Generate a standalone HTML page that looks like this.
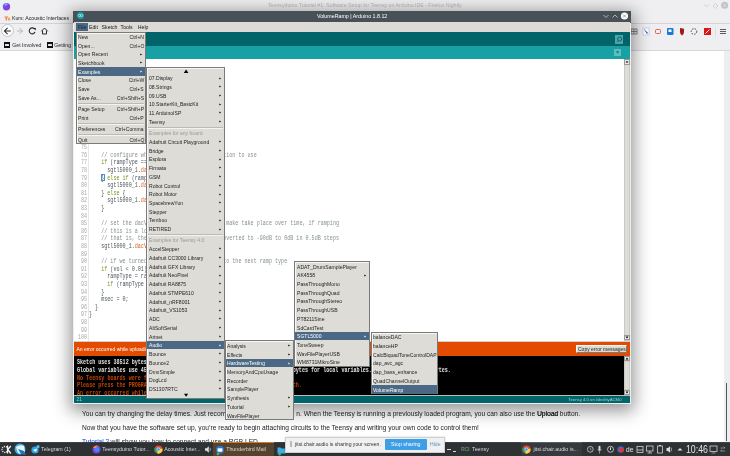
<!DOCTYPE html><html><head><meta charset="utf-8"><style>
*{margin:0;padding:0;box-sizing:border-box}
html,body{width:730px;height:456px;overflow:hidden;background:#fff;font-family:"Liberation Sans",sans-serif}
#root{position:absolute;left:0;top:0;width:730px;height:456px;overflow:hidden;will-change:transform}
.a{position:absolute}
.t{position:absolute;white-space:pre;line-height:1}
.m{position:absolute;background:#dddcd7;border:1px solid #7a7a7a;box-shadow:inset 1px 1px 0 #f6f6f4}
.mi{position:absolute;left:1px;height:8.8px;font-size:5.05px;color:#1a1a1a;white-space:pre}
.mi span{position:absolute;top:2px}
.hl{background:#4b6885;color:#fff}
.ar{position:absolute;width:0;height:0;border-left:2px solid #000;border-top:1.3px solid transparent;border-bottom:1.3px solid transparent}
.hl .ar{border-left-color:#fff}
.sp{position:absolute;height:1px;background:#bcbab5}
.mo{position:absolute;font-family:"Liberation Mono",monospace;white-space:pre;line-height:1}
</style></head><body><div id="root"><div class="a" style="left:0px;top:0px;width:730px;height:51px;background:#efeff1;"></div>
<div class="a" style="left:0px;top:23px;width:730px;height:1px;background:#d4d4d8;"></div>
<div class="a" style="left:0px;top:50px;width:730px;height:1px;background:#d8d8dc;"></div>
<div class="a" style="left:724px;top:51px;width:6px;height:391px;background:#eeeef0;"></div>
<div class="a" style="left:726px;top:383px;width:1px;height:58px;background:#555;"></div>
<div class="t" style="left:268px;top:3.1px;font-size:5.22px;color:#b9b9bd;">Teensyduino Tutorial #1: Software Setup for Teensy on Arduino IDE - Firefox Nightly</div>
<svg class="a" style="left:1.5px;top:1.5px" width="9" height="9"><defs><linearGradient id="ffg" x1="0" y1="0" x2="1" y2="1"><stop offset="0" stop-color="#4a7cff"/><stop offset="0.6" stop-color="#7a3fe0"/><stop offset="1" stop-color="#c03ad8"/></linearGradient></defs><circle cx="4.5" cy="4.7" r="3.7" fill="url(#ffg)"/><path d="M2.5 2.2 Q4.5 1 6 2.3 Q4.2 2.4 3.6 4" fill="#a9c8ff" opacity="0.8"/></svg>
<svg class="a" style="left:700px;top:1px" width="30" height="10"><path d="M4.2 3.4 L6.6 5.6 L9 3.4" stroke="#c4c4c8" fill="none" stroke-width="0.7"/><path d="M15.5 2.6 L18 5 L15.5 7.4 L13 5Z" stroke="#c4c4c8" fill="none" stroke-width="0.7"/><circle cx="24.6" cy="4.3" r="3.5" fill="#c2c4c8"/><path d="M23.2 2.9 L26 5.7 M26 2.9 L23.2 5.7" stroke="#e6e7ea" stroke-width="0.7"/></svg>
<svg class="a" style="left:3.5px;top:15px" width="7" height="6"><path d="M0.5 1.5 H4 V2.6 H2.9 V5.5 H1.6 V2.6 H0.5Z" fill="#f0823a"/><path d="M3.6 3 Q4.6 2 5.6 2.6 Q6.5 3.5 6.2 5.5 H4 Z" fill="#f6a25a"/></svg>
<div class="t" style="left:12px;top:15.6px;font-size:5.2px;color:#1e1e22;">Kurs: Acoustic Interfaces</div>
<div class="a" style="left:1.2px;top:24.3px;width:13px;height:13px;border-radius:50%;background:#fbfbfb;border:0.6px solid #c8c8cc"></div>
<svg class="a" style="left:0;top:23px" width="60" height="17"><path d="M4.8 8 H10.8 M7.6 4.8 L4.4 8 L7.6 11.2" stroke="#2a2a2e" fill="none" stroke-width="1.05"/><path d="M17 8 H22.5 M19.5 5 L22.5 8 L19.5 11" stroke="#b0b0b4" fill="none" stroke-width="0.9"/><path d="M34.6 6 A3 3 0 1 0 35 9" stroke="#2a2a2e" fill="none" stroke-width="1.1"/><path d="M33 5 L35.8 5 L35.8 7.5 Z" fill="#2a2a2e"/><path d="M41.3 8.3 L44.5 5 L47.7 8.3 M42.5 7.5 V11 H46.5 V7.5" stroke="#2a2a2e" fill="none" stroke-width="1"/></svg>
<div class="a" style="left:4.3px;top:41.6px;width:6.2px;height:6.2px;background:#111;"></div>
<div class="a" style="left:5.4px;top:44.3px;width:4px;height:1.8px;background:#e8e8e8;border-radius:0.5px"></div>
<div class="t" style="left:12.3px;top:42.5px;font-size:5.2px;color:#2a2a2e;">Get Involved</div>
<div class="a" style="left:46.6px;top:41.6px;width:6.2px;height:6.2px;background:#111;"></div>
<div class="a" style="left:47.7px;top:44.3px;width:4px;height:1.8px;background:#e8e8e8;border-radius:0.5px"></div>
<div class="t" style="left:54.3px;top:42.5px;font-size:5.2px;color:#2a2a2e;">Getting Started</div>
<svg class="a" style="left:630px;top:26px" width="100" height="12"><rect x="1" y="3" width="6" height="5" fill="none" stroke="#6a6a6e" stroke-width="0.8"/><path d="M1 5.5 H7 M4 3 V8" stroke="#6a6a6e" stroke-width="0.8"/><rect x="13" y="2" width="6" height="7" fill="#fff" stroke="#aac" stroke-width="0.5"/><path d="M13.5 2.5 L18 7 L17 8 Z" fill="#1a55c0"/><rect x="25.5" y="3.5" width="5" height="4" rx="1" fill="none" stroke="#e0524a" stroke-width="0.9"/><rect x="37" y="2" width="6.5" height="7" rx="1" fill="#1b7ad8"/><rect x="38.5" y="3.5" width="3" height="2.5" fill="#fff"/><path d="M50 2 L54 2.8 L54 6 Q54 8.5 52 9.5 Q50 8.5 50 6 Z" fill="#a01818"/><circle cx="64" cy="5.5" r="2.8" fill="none" stroke="#333" stroke-width="0.9" stroke-dasharray="1.5 1.2"/><rect x="74" y="2" width="7" height="7" fill="#d81818"/><path d="M75.5 7.5 L79.5 3.5" stroke="#fff" stroke-width="0.9"/><rect x="85" y="1" width="0.6" height="10" fill="#d4d4d8"/><path d="M90 3.5 H96 M90 5.5 H96 M90 7.5 H96" stroke="#4a4a4e" stroke-width="0.9"/></svg>
<div class="t" style="left:82px;top:411.2px;font-size:6.64px;color:#222;">You can try changing the delay times. Just recompile</div>
<div class="t" style="left:296.3px;top:411.2px;font-size:6.64px;color:#222">n. When the Teensy is running a previously loaded program, you can also use the <span style="text-shadow:0.3px 0 0 #222">Upload</span> button.</div>
<div class="t" style="left:82px;top:425.2px;font-size:6.64px;color:#222;">Now that you have the software set up, you’re ready to begin attaching circuits to the Teensy and writing your own code to control them!</div>
<div class="t" style="left:82px;top:439.2px;font-size:6.6px;color:#0a3cd8;">Tutorial 2</div>
<div class="t" style="left:110.6px;top:439.2px;font-size:6.64px;color:#222;">will show you how to connect and use a RGB LED</div>
<div class="a" style="left:73.3px;top:11px;width:557.5px;height:393.3px;background:#efefef;box-shadow:0 4px 16px 3px rgba(0,0,0,.42)"></div>
<div class="a" style="left:73.3px;top:11px;width:557.5px;height:11.6px;background:#485157;"></div>
<div class="a" style="left:76.5px;top:12.3px;width:7px;height:7px;border-radius:50%;background:#17a1a5"></div>
<svg class="a" style="left:76.5px;top:12.3px" width="7" height="7"><circle cx="2.4" cy="3.5" r="1.1" fill="none" stroke="#e6f7f7" stroke-width="0.6"/><circle cx="4.6" cy="3.5" r="1.1" fill="none" stroke="#e6f7f7" stroke-width="0.6"/></svg>
<div class="t" style="left:317px;top:14.2px;font-size:5.3px;color:#fff;">VolumeRamp | Arduino 1.8.12</div>
<svg class="a" style="left:600px;top:11px" width="31" height="10"><path d="M3.5 4 L6 6.5 L8.5 4" stroke="#c8ccd0" fill="none" stroke-width="0.8"/><path d="M12.5 6.5 L15 4 L17.5 6.5" stroke="#c8ccd0" fill="none" stroke-width="0.8"/><circle cx="24.5" cy="5" r="3.6" fill="#fff"/><path d="M23 3.5 L26 6.5 M26 3.5 L23 6.5" stroke="#8a8e92" stroke-width="0.8"/></svg>
<div class="a" style="left:74.3px;top:21.6px;width:555.5px;height:10.7px;background:#dcdbd6;"></div>
<div class="a" style="left:74.3px;top:31.8px;width:555.5px;height:0.5px;background:#555;"></div>
<div class="a" style="left:76px;top:22.6px;width:11.8px;height:8.6px;background:#4b6885;"></div>
<div class="t" style="left:78px;top:24.6px;font-size:5.2px;color:#1d2630;">File</div>
<div class="t" style="left:89px;top:24.6px;font-size:5.2px;color:#1a1a1a;">Edit</div>
<div class="t" style="left:101.6px;top:24.6px;font-size:5.2px;color:#1a1a1a;">Sketch</div>
<div class="t" style="left:120.6px;top:24.6px;font-size:5.2px;color:#1a1a1a;">Tools</div>
<div class="t" style="left:137.8px;top:24.6px;font-size:5.2px;color:#1a1a1a;">Help</div>
<div class="a" style="left:74.3px;top:32.3px;width:555.5px;height:14.2px;background:#006468;"></div>
<div class="a" style="left:615px;top:35px;width:8px;height:9px;background:#4aa6a9;"></div>
<svg class="a" style="left:615px;top:35px" width="8" height="9"><circle cx="4.7" cy="4" r="2" fill="none" stroke="#0b5c60" stroke-width="0.9"/><path d="M3.3 5.4 L1.9 7" stroke="#0b5c60" stroke-width="0.9"/></svg>
<div class="a" style="left:74.3px;top:45.5px;width:555.5px;height:13.3px;background:#17a1a5;"></div>
<div class="a" style="left:614px;top:49px;width:7px;height:6.5px;background:#5cbdc0;"></div>
<svg class="a" style="left:614px;top:49px" width="7" height="7"><path d="M1.8 2.3 H5.2 L3.5 4.5 Z" fill="#1a6f73"/></svg>
<div class="a" style="left:74.3px;top:59px;width:555.5px;height:282px;background:#fff;"></div>
<div class="a" style="left:88.3px;top:59px;width:0.7px;height:282px;background:#e6e6e6;"></div>
<div class="mo" style="left:81.20px;top:144.10px;font-size:6.800px;color:#a8a8a8;transform:scaleX(0.7475);transform-origin:0 0">75</div>
<div class="mo" style="left:81.20px;top:151.70px;font-size:6.800px;color:#a8a8a8;transform:scaleX(0.7475);transform-origin:0 0">76</div>
<div class="mo" style="left:88.9px;top:151.70px;font-size:6.800px;transform:scaleX(0.7475);transform-origin:0 0"><span style="color:#4a565b">    </span><span style="color:#85908f">// configure which type of volume transition to use</span></div>
<div class="mo" style="left:81.20px;top:159.30px;font-size:6.800px;color:#a8a8a8;transform:scaleX(0.7475);transform-origin:0 0">77</div>
<div class="mo" style="left:88.9px;top:159.30px;font-size:6.800px;transform:scaleX(0.7475);transform-origin:0 0"><span style="color:#4a565b">    </span><span style="color:#7a9220">if</span><span style="color:#4a565b"> (rampType == 0) {</span></div>
<div class="mo" style="left:81.20px;top:166.90px;font-size:6.800px;color:#a8a8a8;transform:scaleX(0.7475);transform-origin:0 0">78</div>
<div class="mo" style="left:88.9px;top:166.90px;font-size:6.800px;transform:scaleX(0.7475);transform-origin:0 0"><span style="color:#4a565b">      sgtl5000_1.</span><span style="color:#d9621a">dacVolumeRampDisable</span><span style="color:#4a565b">();</span></div>
<div class="mo" style="left:81.20px;top:174.50px;font-size:6.800px;color:#a8a8a8;transform:scaleX(0.7475);transform-origin:0 0">79</div>
<div class="mo" style="left:88.9px;top:174.50px;font-size:6.800px;transform:scaleX(0.7475);transform-origin:0 0"><span style="color:#4a565b">    } </span><span style="color:#7a9220">else</span><span style="color:#4a565b"> </span><span style="color:#7a9220">if</span><span style="color:#4a565b"> (rampType == 1) {</span></div>
<div class="mo" style="left:81.20px;top:182.10px;font-size:6.800px;color:#a8a8a8;transform:scaleX(0.7475);transform-origin:0 0">80</div>
<div class="mo" style="left:88.9px;top:182.10px;font-size:6.800px;transform:scaleX(0.7475);transform-origin:0 0"><span style="color:#4a565b">      sgtl5000_1.</span><span style="color:#d9621a">dacVolumeRampLinear</span><span style="color:#4a565b">();</span></div>
<div class="mo" style="left:81.20px;top:189.70px;font-size:6.800px;color:#a8a8a8;transform:scaleX(0.7475);transform-origin:0 0">81</div>
<div class="mo" style="left:88.9px;top:189.70px;font-size:6.800px;transform:scaleX(0.7475);transform-origin:0 0"><span style="color:#4a565b">    } </span><span style="color:#7a9220">else</span><span style="color:#4a565b"> {</span></div>
<div class="mo" style="left:81.20px;top:197.30px;font-size:6.800px;color:#a8a8a8;transform:scaleX(0.7475);transform-origin:0 0">82</div>
<div class="mo" style="left:88.9px;top:197.30px;font-size:6.800px;transform:scaleX(0.7475);transform-origin:0 0"><span style="color:#4a565b">      sgtl5000_1.</span><span style="color:#d9621a">dacVolumeRamp</span><span style="color:#4a565b">();</span></div>
<div class="mo" style="left:81.20px;top:204.90px;font-size:6.800px;color:#a8a8a8;transform:scaleX(0.7475);transform-origin:0 0">83</div>
<div class="mo" style="left:88.9px;top:204.90px;font-size:6.800px;transform:scaleX(0.7475);transform-origin:0 0"><span style="color:#4a565b">    }</span></div>
<div class="mo" style="left:81.20px;top:212.50px;font-size:6.800px;color:#a8a8a8;transform:scaleX(0.7475);transform-origin:0 0">84</div>
<div class="mo" style="left:81.20px;top:220.10px;font-size:6.800px;color:#a8a8a8;transform:scaleX(0.7475);transform-origin:0 0">85</div>
<div class="mo" style="left:88.9px;top:220.10px;font-size:6.800px;transform:scaleX(0.7475);transform-origin:0 0"><span style="color:#4a565b">    </span><span style="color:#85908f">// set the dacVolume. Volume changes you make take place over time, if ramping</span></div>
<div class="mo" style="left:81.20px;top:227.70px;font-size:6.800px;color:#a8a8a8;transform:scaleX(0.7475);transform-origin:0 0">86</div>
<div class="mo" style="left:88.9px;top:227.70px;font-size:6.800px;transform:scaleX(0.7475);transform-origin:0 0"><span style="color:#4a565b">    </span><span style="color:#85908f">// this is a log scale</span></div>
<div class="mo" style="left:81.20px;top:235.30px;font-size:6.800px;color:#a8a8a8;transform:scaleX(0.7475);transform-origin:0 0">87</div>
<div class="mo" style="left:88.9px;top:235.30px;font-size:6.800px;transform:scaleX(0.7475);transform-origin:0 0"><span style="color:#4a565b">    </span><span style="color:#85908f">// that is, the values of 0 to 1.0 is converted to -90dB to 0dB in 0.5dB steps</span></div>
<div class="mo" style="left:81.20px;top:242.90px;font-size:6.800px;color:#a8a8a8;transform:scaleX(0.7475);transform-origin:0 0">88</div>
<div class="mo" style="left:88.9px;top:242.90px;font-size:6.800px;transform:scaleX(0.7475);transform-origin:0 0"><span style="color:#4a565b">    sgtl5000_1.</span><span style="color:#d9621a">dacVolume</span><span style="color:#4a565b">(vol);</span></div>
<div class="mo" style="left:81.20px;top:250.50px;font-size:6.800px;color:#a8a8a8;transform:scaleX(0.7475);transform-origin:0 0">89</div>
<div class="mo" style="left:81.20px;top:258.10px;font-size:6.800px;color:#a8a8a8;transform:scaleX(0.7475);transform-origin:0 0">90</div>
<div class="mo" style="left:88.9px;top:258.10px;font-size:6.800px;transform:scaleX(0.7475);transform-origin:0 0"><span style="color:#4a565b">    </span><span style="color:#85908f">// if we turned the volume down, switch to the next ramp type</span></div>
<div class="mo" style="left:81.20px;top:265.70px;font-size:6.800px;color:#a8a8a8;transform:scaleX(0.7475);transform-origin:0 0">91</div>
<div class="mo" style="left:88.9px;top:265.70px;font-size:6.800px;transform:scaleX(0.7475);transform-origin:0 0"><span style="color:#4a565b">    </span><span style="color:#7a9220">if</span><span style="color:#4a565b"> (vol &lt; 0.01) {</span></div>
<div class="mo" style="left:81.20px;top:273.30px;font-size:6.800px;color:#a8a8a8;transform:scaleX(0.7475);transform-origin:0 0">92</div>
<div class="mo" style="left:88.9px;top:273.30px;font-size:6.800px;transform:scaleX(0.7475);transform-origin:0 0"><span style="color:#4a565b">      rampType = rampType + 1;</span></div>
<div class="mo" style="left:81.20px;top:280.90px;font-size:6.800px;color:#a8a8a8;transform:scaleX(0.7475);transform-origin:0 0">93</div>
<div class="mo" style="left:88.9px;top:280.90px;font-size:6.800px;transform:scaleX(0.7475);transform-origin:0 0"><span style="color:#4a565b">      </span><span style="color:#7a9220">if</span><span style="color:#4a565b"> (rampType &gt; 2) rampType = 0;</span></div>
<div class="mo" style="left:81.20px;top:288.50px;font-size:6.800px;color:#a8a8a8;transform:scaleX(0.7475);transform-origin:0 0">94</div>
<div class="mo" style="left:88.9px;top:288.50px;font-size:6.800px;transform:scaleX(0.7475);transform-origin:0 0"><span style="color:#4a565b">    }</span></div>
<div class="mo" style="left:81.20px;top:296.10px;font-size:6.800px;color:#a8a8a8;transform:scaleX(0.7475);transform-origin:0 0">95</div>
<div class="mo" style="left:88.9px;top:296.10px;font-size:6.800px;transform:scaleX(0.7475);transform-origin:0 0"><span style="color:#4a565b">    msec = 0;</span></div>
<div class="mo" style="left:81.20px;top:303.70px;font-size:6.800px;color:#a8a8a8;transform:scaleX(0.7475);transform-origin:0 0">96</div>
<div class="mo" style="left:88.9px;top:303.70px;font-size:6.800px;transform:scaleX(0.7475);transform-origin:0 0"><span style="color:#4a565b">  }</span></div>
<div class="mo" style="left:81.20px;top:311.30px;font-size:6.800px;color:#a8a8a8;transform:scaleX(0.7475);transform-origin:0 0">97</div>
<div class="mo" style="left:88.9px;top:311.30px;font-size:6.800px;transform:scaleX(0.7475);transform-origin:0 0"><span style="color:#4a565b">}</span></div>
<div class="mo" style="left:81.20px;top:318.90px;font-size:6.800px;color:#a8a8a8;transform:scaleX(0.7475);transform-origin:0 0">98</div>
<div class="mo" style="left:81.20px;top:326.50px;font-size:6.800px;color:#a8a8a8;transform:scaleX(0.7475);transform-origin:0 0">99</div>
<div class="mo" style="left:78.15px;top:334.10px;font-size:6.800px;color:#a8a8a8;transform:scaleX(0.7475);transform-origin:0 0">100</div>
<div class="a" style="left:101.3px;top:174px;width:3.4px;height:6.6px;border:0.6px solid #4a90c8"></div>
<div class="a" style="left:623.5px;top:59px;width:6.8px;height:282px;background:#cbc9c3;"></div>
<div class="a" style="left:625px;top:65px;width:3.6px;height:270px;background:#dddcd6;"></div>
<div class="a" style="left:624px;top:59px;width:6px;height:5.5px;background:#e8e7e3;border:0.5px solid #999"></div>
<svg class="a" style="left:624px;top:59px" width="6" height="6"><path d="M1.6 3.6 H4.4 L3 1.8 Z" fill="#000"/></svg>
<div class="a" style="left:624px;top:335px;width:6px;height:5px;background:#e8e7e3;border:0.5px solid #999"></div>
<svg class="a" style="left:624px;top:335px" width="6" height="6"><path d="M1.6 1.6 H4.4 L3 3.4 Z" fill="#000"/></svg>
<div class="a" style="left:74.3px;top:341px;width:555.5px;height:1px;background:#d0d0d0;"></div>
<div class="a" style="left:74.3px;top:342px;width:555.5px;height:13.5px;background:#e34c00;"></div>
<div class="t" style="left:76.4px;top:347.4px;font-size:5.0px;color:#fff;">An error occurred while uploading the sketch</div>
<div class="a" style="left:576.2px;top:345px;width:50.8px;height:7.5px;background:#dcdbd6;border-top:0.6px solid #fafafa;border-left:0.6px solid #fafafa;border-bottom:0.7px solid #7a7a7a;border-right:0.7px solid #7a7a7a"></div>
<div class="t" style="left:578px;top:346.6px;font-size:5.0px;color:#222;">Copy error messages</div>
<div class="a" style="left:74.3px;top:355.5px;width:555.5px;height:39.5px;background:#000;"></div>
<div class="mo" style="left:76.5px;top:359.30px;font-size:6.8px;color:#fff;font-weight:bold;opacity:0.88;transform:scaleX(0.7451);transform-origin:0 0">Sketch uses 38512 bytes (0%) of program storage space. Maximum is 2031616 bytes.</div>
<div class="mo" style="left:76.5px;top:366.90px;font-size:6.8px;color:#fff;font-weight:bold;opacity:0.88;transform:scaleX(0.7451);transform-origin:0 0">Global variables use 4591 bytes (8%) of dynamic memory, leaving 466084 bytes for local variables. Maximum is 1048576 bytes.</div>
<div class="mo" style="left:76.5px;top:374.50px;font-size:6.8px;color:#e34c00;font-weight:bold;opacity:0.88;transform:scaleX(0.7451);transform-origin:0 0">No Teensy boards were found on any USB ports of your computer.</div>
<div class="mo" style="left:76.5px;top:382.10px;font-size:6.8px;color:#e34c00;font-weight:bold;opacity:0.88;transform:scaleX(0.7451);transform-origin:0 0">Please press the PROGRAM MODE BUTTON on your Teensy to upload your sketch.</div>
<div class="mo" style="left:76.5px;top:389.70px;font-size:6.8px;color:#e34c00;font-weight:bold;opacity:0.88;transform:scaleX(0.7451);transform-origin:0 0">An error occurred while uploading the sketch</div>
<div class="a" style="left:623.5px;top:355.8px;width:6.8px;height:39.2px;background:#cbc9c3;"></div>
<div class="a" style="left:625px;top:362px;width:3.6px;height:27px;background:#dddcd6;"></div>
<div class="a" style="left:624px;top:356px;width:6px;height:5px;background:#e8e7e3;border:0.5px solid #999"></div>
<svg class="a" style="left:624px;top:356px" width="6" height="6"><path d="M1.6 3.4 H4.4 L3 1.6 Z" fill="#000"/></svg>
<div class="a" style="left:624px;top:389.6px;width:6px;height:5px;background:#e8e7e3;border:0.5px solid #999"></div>
<svg class="a" style="left:624px;top:389.6px" width="6" height="6"><path d="M1.6 1.6 H4.4 L3 3.4 Z" fill="#000"/></svg>
<div class="a" style="left:74.3px;top:394.9px;width:555.5px;height:1px;background:#b8bcbc;"></div>
<div class="a" style="left:74.3px;top:395.6px;width:555.5px;height:7.9px;background:#006468;"></div>
<div class="t" style="left:76.5px;top:397.3px;font-size:5.0px;color:#9fcfd1;">21</div>
<div class="t" style="right:108.5px;top:397.6px;font-size:4.25px;color:#a6d2d4">Teensy 4.0 on /dev/ttyACM0</div>
<div class="m" style="left:75.5px;top:31.6px;width:70.5px;height:112.6px"></div>
<div class="t" style="left:78.30px;top:35.00px;font-size:5.6px;color:#1e1e1e;transform:scaleX(0.905);transform-origin:0 0">New</div>
<div class="t" style="right:586.00px;top:35.00px;font-size:5.6px;color:#1e1e1e;transform:scaleX(0.905);transform-origin:100% 0">Ctrl+N</div>
<div class="t" style="left:78.30px;top:43.67px;font-size:5.6px;color:#1e1e1e;transform:scaleX(0.905);transform-origin:0 0">Open...</div>
<div class="t" style="right:586.00px;top:43.67px;font-size:5.6px;color:#1e1e1e;transform:scaleX(0.905);transform-origin:100% 0">Ctrl+O</div>
<div class="t" style="left:78.30px;top:52.34px;font-size:5.6px;color:#1e1e1e;transform:scaleX(0.905);transform-origin:0 0">Open Recent</div>
<svg class="a" style="left:138.50px;top:51.64px" width="5" height="5"><path d="M1.4 1.4 L3.1 2.5 L1.4 3.6 Z" fill="#000"/></svg>
<div class="t" style="left:78.30px;top:61.01px;font-size:5.6px;color:#1e1e1e;transform:scaleX(0.905);transform-origin:0 0">Sketchbook</div>
<svg class="a" style="left:138.50px;top:60.31px" width="5" height="5"><path d="M1.4 1.4 L3.1 2.5 L1.4 3.6 Z" fill="#000"/></svg>
<div class="a" style="left:76.5px;top:67.08px;width:68.5px;height:8.8px;background:#4b6885"></div>
<div class="t" style="left:78.30px;top:69.68px;font-size:5.6px;color:#fff;transform:scaleX(0.905);transform-origin:0 0">Examples</div>
<svg class="a" style="left:138.50px;top:68.98px" width="5" height="5"><path d="M1.4 1.4 L3.1 2.5 L1.4 3.6 Z" fill="#fff"/></svg>
<div class="t" style="left:78.30px;top:78.35px;font-size:5.6px;color:#1e1e1e;transform:scaleX(0.905);transform-origin:0 0">Close</div>
<div class="t" style="right:586.00px;top:78.35px;font-size:5.6px;color:#1e1e1e;transform:scaleX(0.905);transform-origin:100% 0">Ctrl+W</div>
<div class="t" style="left:78.30px;top:87.02px;font-size:5.6px;color:#1e1e1e;transform:scaleX(0.905);transform-origin:0 0">Save</div>
<div class="t" style="right:586.00px;top:87.02px;font-size:5.6px;color:#1e1e1e;transform:scaleX(0.905);transform-origin:100% 0">Ctrl+S</div>
<div class="t" style="left:78.30px;top:95.69px;font-size:5.6px;color:#1e1e1e;transform:scaleX(0.905);transform-origin:0 0">Save As...</div>
<div class="t" style="right:586.00px;top:95.69px;font-size:5.6px;color:#1e1e1e;transform:scaleX(0.905);transform-origin:100% 0">Ctrl+Shift+S</div>
<div class="sp" style="left:77.5px;top:102.68px;width:66.5px"></div>
<div class="a" style="left:77.5px;top:103.68px;width:66.5px;height:0.6px;background:#f3f3f0"></div>
<div class="t" style="left:78.30px;top:107.06px;font-size:5.6px;color:#1e1e1e;transform:scaleX(0.905);transform-origin:0 0">Page Setup</div>
<div class="t" style="right:586.00px;top:107.06px;font-size:5.6px;color:#1e1e1e;transform:scaleX(0.905);transform-origin:100% 0">Ctrl+Shift+P</div>
<div class="t" style="left:78.30px;top:115.73px;font-size:5.6px;color:#1e1e1e;transform:scaleX(0.905);transform-origin:0 0">Print</div>
<div class="t" style="right:586.00px;top:115.73px;font-size:5.6px;color:#1e1e1e;transform:scaleX(0.905);transform-origin:100% 0">Ctrl+P</div>
<div class="sp" style="left:77.5px;top:122.72px;width:66.5px"></div>
<div class="a" style="left:77.5px;top:123.72px;width:66.5px;height:0.6px;background:#f3f3f0"></div>
<div class="t" style="left:78.30px;top:127.10px;font-size:5.6px;color:#1e1e1e;transform:scaleX(0.905);transform-origin:0 0">Preferences</div>
<div class="t" style="right:586.00px;top:127.10px;font-size:5.6px;color:#1e1e1e;transform:scaleX(0.905);transform-origin:100% 0">Ctrl+Comma</div>
<div class="sp" style="left:77.5px;top:134.08px;width:66.5px"></div>
<div class="a" style="left:77.5px;top:135.08px;width:66.5px;height:0.6px;background:#f3f3f0"></div>
<div class="t" style="left:78.30px;top:138.47px;font-size:5.6px;color:#1e1e1e;transform:scaleX(0.905);transform-origin:0 0">Quit</div>
<div class="t" style="right:586.00px;top:138.47px;font-size:5.6px;color:#1e1e1e;transform:scaleX(0.905);transform-origin:100% 0">Ctrl+Q</div>
<div class="m" style="left:146.3px;top:67.2px;width:79.2px;height:331.6px"></div>
<div class="t" style="left:149.10px;top:76.20px;font-size:5.6px;color:#1e1e1e;transform:scaleX(0.905);transform-origin:0 0">07.Display</div>
<svg class="a" style="left:218.00px;top:75.50px" width="5" height="5"><path d="M1.4 1.4 L3.1 2.5 L1.4 3.6 Z" fill="#000"/></svg>
<div class="t" style="left:149.10px;top:84.94px;font-size:5.6px;color:#1e1e1e;transform:scaleX(0.905);transform-origin:0 0">08.Strings</div>
<svg class="a" style="left:218.00px;top:84.24px" width="5" height="5"><path d="M1.4 1.4 L3.1 2.5 L1.4 3.6 Z" fill="#000"/></svg>
<div class="t" style="left:149.10px;top:93.68px;font-size:5.6px;color:#1e1e1e;transform:scaleX(0.905);transform-origin:0 0">09.USB</div>
<svg class="a" style="left:218.00px;top:92.98px" width="5" height="5"><path d="M1.4 1.4 L3.1 2.5 L1.4 3.6 Z" fill="#000"/></svg>
<div class="t" style="left:149.10px;top:102.42px;font-size:5.6px;color:#1e1e1e;transform:scaleX(0.905);transform-origin:0 0">10.StarterKit_BasicKit</div>
<svg class="a" style="left:218.00px;top:101.72px" width="5" height="5"><path d="M1.4 1.4 L3.1 2.5 L1.4 3.6 Z" fill="#000"/></svg>
<div class="t" style="left:149.10px;top:111.16px;font-size:5.6px;color:#1e1e1e;transform:scaleX(0.905);transform-origin:0 0">11.ArduinoISP</div>
<svg class="a" style="left:218.00px;top:110.46px" width="5" height="5"><path d="M1.4 1.4 L3.1 2.5 L1.4 3.6 Z" fill="#000"/></svg>
<div class="t" style="left:149.10px;top:119.90px;font-size:5.6px;color:#1e1e1e;transform:scaleX(0.905);transform-origin:0 0">Teensy</div>
<svg class="a" style="left:218.00px;top:119.20px" width="5" height="5"><path d="M1.4 1.4 L3.1 2.5 L1.4 3.6 Z" fill="#000"/></svg>
<div class="sp" style="left:148.3px;top:126.79px;width:75.2px"></div>
<div class="a" style="left:148.3px;top:127.79px;width:75.2px;height:0.6px;background:#f3f3f0"></div>
<div class="t" style="left:149.10px;top:131.09px;font-size:5.6px;color:#9c9b96;transform:scaleX(0.905);transform-origin:0 0">Examples for any board</div>
<div class="t" style="left:149.10px;top:139.83px;font-size:5.6px;color:#1e1e1e;transform:scaleX(0.905);transform-origin:0 0">Adafruit Circuit Playground</div>
<svg class="a" style="left:218.00px;top:139.13px" width="5" height="5"><path d="M1.4 1.4 L3.1 2.5 L1.4 3.6 Z" fill="#000"/></svg>
<div class="t" style="left:149.10px;top:148.57px;font-size:5.6px;color:#1e1e1e;transform:scaleX(0.905);transform-origin:0 0">Bridge</div>
<svg class="a" style="left:218.00px;top:147.87px" width="5" height="5"><path d="M1.4 1.4 L3.1 2.5 L1.4 3.6 Z" fill="#000"/></svg>
<div class="t" style="left:149.10px;top:157.31px;font-size:5.6px;color:#1e1e1e;transform:scaleX(0.905);transform-origin:0 0">Esplora</div>
<svg class="a" style="left:218.00px;top:156.61px" width="5" height="5"><path d="M1.4 1.4 L3.1 2.5 L1.4 3.6 Z" fill="#000"/></svg>
<div class="t" style="left:149.10px;top:166.05px;font-size:5.6px;color:#1e1e1e;transform:scaleX(0.905);transform-origin:0 0">Firmata</div>
<svg class="a" style="left:218.00px;top:165.35px" width="5" height="5"><path d="M1.4 1.4 L3.1 2.5 L1.4 3.6 Z" fill="#000"/></svg>
<div class="t" style="left:149.10px;top:174.79px;font-size:5.6px;color:#1e1e1e;transform:scaleX(0.905);transform-origin:0 0">GSM</div>
<svg class="a" style="left:218.00px;top:174.09px" width="5" height="5"><path d="M1.4 1.4 L3.1 2.5 L1.4 3.6 Z" fill="#000"/></svg>
<div class="t" style="left:149.10px;top:183.53px;font-size:5.6px;color:#1e1e1e;transform:scaleX(0.905);transform-origin:0 0">Robot Control</div>
<svg class="a" style="left:218.00px;top:182.83px" width="5" height="5"><path d="M1.4 1.4 L3.1 2.5 L1.4 3.6 Z" fill="#000"/></svg>
<div class="t" style="left:149.10px;top:192.27px;font-size:5.6px;color:#1e1e1e;transform:scaleX(0.905);transform-origin:0 0">Robot Motor</div>
<svg class="a" style="left:218.00px;top:191.57px" width="5" height="5"><path d="M1.4 1.4 L3.1 2.5 L1.4 3.6 Z" fill="#000"/></svg>
<div class="t" style="left:149.10px;top:201.01px;font-size:5.6px;color:#1e1e1e;transform:scaleX(0.905);transform-origin:0 0">SpacebrewYun</div>
<svg class="a" style="left:218.00px;top:200.31px" width="5" height="5"><path d="M1.4 1.4 L3.1 2.5 L1.4 3.6 Z" fill="#000"/></svg>
<div class="t" style="left:149.10px;top:209.75px;font-size:5.6px;color:#1e1e1e;transform:scaleX(0.905);transform-origin:0 0">Stepper</div>
<svg class="a" style="left:218.00px;top:209.05px" width="5" height="5"><path d="M1.4 1.4 L3.1 2.5 L1.4 3.6 Z" fill="#000"/></svg>
<div class="t" style="left:149.10px;top:218.49px;font-size:5.6px;color:#1e1e1e;transform:scaleX(0.905);transform-origin:0 0">Temboo</div>
<svg class="a" style="left:218.00px;top:217.79px" width="5" height="5"><path d="M1.4 1.4 L3.1 2.5 L1.4 3.6 Z" fill="#000"/></svg>
<div class="t" style="left:149.10px;top:227.23px;font-size:5.6px;color:#1e1e1e;transform:scaleX(0.905);transform-origin:0 0">RETIRED</div>
<svg class="a" style="left:218.00px;top:226.53px" width="5" height="5"><path d="M1.4 1.4 L3.1 2.5 L1.4 3.6 Z" fill="#000"/></svg>
<div class="sp" style="left:148.3px;top:234.13px;width:75.2px"></div>
<div class="a" style="left:148.3px;top:235.13px;width:75.2px;height:0.6px;background:#f3f3f0"></div>
<div class="t" style="left:149.10px;top:238.42px;font-size:5.6px;color:#9c9b96;transform:scaleX(0.905);transform-origin:0 0">Examples for Teensy 4.0</div>
<div class="t" style="left:149.10px;top:247.16px;font-size:5.6px;color:#1e1e1e;transform:scaleX(0.905);transform-origin:0 0">AccelStepper</div>
<svg class="a" style="left:218.00px;top:246.46px" width="5" height="5"><path d="M1.4 1.4 L3.1 2.5 L1.4 3.6 Z" fill="#000"/></svg>
<div class="t" style="left:149.10px;top:255.90px;font-size:5.6px;color:#1e1e1e;transform:scaleX(0.905);transform-origin:0 0">Adafruit CC3000 Library</div>
<svg class="a" style="left:218.00px;top:255.20px" width="5" height="5"><path d="M1.4 1.4 L3.1 2.5 L1.4 3.6 Z" fill="#000"/></svg>
<div class="t" style="left:149.10px;top:264.64px;font-size:5.6px;color:#1e1e1e;transform:scaleX(0.905);transform-origin:0 0">Adafruit GFX Library</div>
<svg class="a" style="left:218.00px;top:263.94px" width="5" height="5"><path d="M1.4 1.4 L3.1 2.5 L1.4 3.6 Z" fill="#000"/></svg>
<div class="t" style="left:149.10px;top:273.38px;font-size:5.6px;color:#1e1e1e;transform:scaleX(0.905);transform-origin:0 0">Adafruit NeoPixel</div>
<svg class="a" style="left:218.00px;top:272.68px" width="5" height="5"><path d="M1.4 1.4 L3.1 2.5 L1.4 3.6 Z" fill="#000"/></svg>
<div class="t" style="left:149.10px;top:282.12px;font-size:5.6px;color:#1e1e1e;transform:scaleX(0.905);transform-origin:0 0">Adafruit RA8875</div>
<svg class="a" style="left:218.00px;top:281.42px" width="5" height="5"><path d="M1.4 1.4 L3.1 2.5 L1.4 3.6 Z" fill="#000"/></svg>
<div class="t" style="left:149.10px;top:290.86px;font-size:5.6px;color:#1e1e1e;transform:scaleX(0.905);transform-origin:0 0">Adafruit STMPE610</div>
<svg class="a" style="left:218.00px;top:290.16px" width="5" height="5"><path d="M1.4 1.4 L3.1 2.5 L1.4 3.6 Z" fill="#000"/></svg>
<div class="t" style="left:149.10px;top:299.60px;font-size:5.6px;color:#1e1e1e;transform:scaleX(0.905);transform-origin:0 0">Adafruit_nRF8001</div>
<svg class="a" style="left:218.00px;top:298.90px" width="5" height="5"><path d="M1.4 1.4 L3.1 2.5 L1.4 3.6 Z" fill="#000"/></svg>
<div class="t" style="left:149.10px;top:308.34px;font-size:5.6px;color:#1e1e1e;transform:scaleX(0.905);transform-origin:0 0">Adafruit_VS1053</div>
<svg class="a" style="left:218.00px;top:307.64px" width="5" height="5"><path d="M1.4 1.4 L3.1 2.5 L1.4 3.6 Z" fill="#000"/></svg>
<div class="t" style="left:149.10px;top:317.08px;font-size:5.6px;color:#1e1e1e;transform:scaleX(0.905);transform-origin:0 0">ADC</div>
<svg class="a" style="left:218.00px;top:316.38px" width="5" height="5"><path d="M1.4 1.4 L3.1 2.5 L1.4 3.6 Z" fill="#000"/></svg>
<div class="t" style="left:149.10px;top:325.82px;font-size:5.6px;color:#1e1e1e;transform:scaleX(0.905);transform-origin:0 0">AltSoftSerial</div>
<svg class="a" style="left:218.00px;top:325.12px" width="5" height="5"><path d="M1.4 1.4 L3.1 2.5 L1.4 3.6 Z" fill="#000"/></svg>
<div class="t" style="left:149.10px;top:334.56px;font-size:5.6px;color:#1e1e1e;transform:scaleX(0.905);transform-origin:0 0">Artnet</div>
<svg class="a" style="left:218.00px;top:333.86px" width="5" height="5"><path d="M1.4 1.4 L3.1 2.5 L1.4 3.6 Z" fill="#000"/></svg>
<div class="a" style="left:147.3px;top:340.70px;width:77.2px;height:8.8px;background:#4b6885"></div>
<div class="t" style="left:149.10px;top:343.30px;font-size:5.6px;color:#fff;transform:scaleX(0.905);transform-origin:0 0">Audio</div>
<svg class="a" style="left:218.00px;top:342.60px" width="5" height="5"><path d="M1.4 1.4 L3.1 2.5 L1.4 3.6 Z" fill="#fff"/></svg>
<div class="t" style="left:149.10px;top:352.04px;font-size:5.6px;color:#1e1e1e;transform:scaleX(0.905);transform-origin:0 0">Bounce</div>
<svg class="a" style="left:218.00px;top:351.34px" width="5" height="5"><path d="M1.4 1.4 L3.1 2.5 L1.4 3.6 Z" fill="#000"/></svg>
<div class="t" style="left:149.10px;top:360.78px;font-size:5.6px;color:#1e1e1e;transform:scaleX(0.905);transform-origin:0 0">Bounce2</div>
<svg class="a" style="left:218.00px;top:360.08px" width="5" height="5"><path d="M1.4 1.4 L3.1 2.5 L1.4 3.6 Z" fill="#000"/></svg>
<div class="t" style="left:149.10px;top:369.52px;font-size:5.6px;color:#1e1e1e;transform:scaleX(0.905);transform-origin:0 0">DmxSimple</div>
<svg class="a" style="left:218.00px;top:368.82px" width="5" height="5"><path d="M1.4 1.4 L3.1 2.5 L1.4 3.6 Z" fill="#000"/></svg>
<div class="t" style="left:149.10px;top:378.26px;font-size:5.6px;color:#1e1e1e;transform:scaleX(0.905);transform-origin:0 0">DogLcd</div>
<svg class="a" style="left:218.00px;top:377.56px" width="5" height="5"><path d="M1.4 1.4 L3.1 2.5 L1.4 3.6 Z" fill="#000"/></svg>
<div class="t" style="left:149.10px;top:387.00px;font-size:5.6px;color:#1e1e1e;transform:scaleX(0.905);transform-origin:0 0">DS1307RTC</div>
<svg class="a" style="left:218.00px;top:386.30px" width="5" height="5"><path d="M1.4 1.4 L3.1 2.5 L1.4 3.6 Z" fill="#000"/></svg>
<svg class="a" style="left:182.5px;top:68.5px" width="7" height="5"><path d="M0.8 3.9 L3.1 0.6 L5.4 3.9 Z" fill="#000"/></svg>
<svg class="a" style="left:182.5px;top:393px" width="7" height="5"><path d="M1 0.8 L3.1 3.8 L5.2 0.8 Z" fill="#000"/></svg>
<div class="m" style="left:224.6px;top:340.4px;width:69.8px;height:79.6px"></div>
<div class="t" style="left:227.40px;top:343.80px;font-size:5.6px;color:#1e1e1e;transform:scaleX(0.905);transform-origin:0 0">Analysis</div>
<svg class="a" style="left:286.90px;top:343.10px" width="5" height="5"><path d="M1.4 1.4 L3.1 2.5 L1.4 3.6 Z" fill="#000"/></svg>
<div class="t" style="left:227.40px;top:352.53px;font-size:5.6px;color:#1e1e1e;transform:scaleX(0.905);transform-origin:0 0">Effects</div>
<svg class="a" style="left:286.90px;top:351.83px" width="5" height="5"><path d="M1.4 1.4 L3.1 2.5 L1.4 3.6 Z" fill="#000"/></svg>
<div class="a" style="left:225.6px;top:358.66px;width:67.8px;height:8.8px;background:#4b6885"></div>
<div class="t" style="left:227.40px;top:361.26px;font-size:5.6px;color:#fff;transform:scaleX(0.905);transform-origin:0 0">HardwareTesting</div>
<svg class="a" style="left:286.90px;top:360.56px" width="5" height="5"><path d="M1.4 1.4 L3.1 2.5 L1.4 3.6 Z" fill="#fff"/></svg>
<div class="t" style="left:227.40px;top:369.99px;font-size:5.6px;color:#1e1e1e;transform:scaleX(0.905);transform-origin:0 0">MemoryAndCpuUsage</div>
<div class="t" style="left:227.40px;top:378.72px;font-size:5.6px;color:#1e1e1e;transform:scaleX(0.905);transform-origin:0 0">Recorder</div>
<div class="t" style="left:227.40px;top:387.45px;font-size:5.6px;color:#1e1e1e;transform:scaleX(0.905);transform-origin:0 0">SamplePlayer</div>
<div class="t" style="left:227.40px;top:396.18px;font-size:5.6px;color:#1e1e1e;transform:scaleX(0.905);transform-origin:0 0">Synthesis</div>
<svg class="a" style="left:286.90px;top:395.48px" width="5" height="5"><path d="M1.4 1.4 L3.1 2.5 L1.4 3.6 Z" fill="#000"/></svg>
<div class="t" style="left:227.40px;top:404.91px;font-size:5.6px;color:#1e1e1e;transform:scaleX(0.905);transform-origin:0 0">Tutorial</div>
<svg class="a" style="left:286.90px;top:404.21px" width="5" height="5"><path d="M1.4 1.4 L3.1 2.5 L1.4 3.6 Z" fill="#000"/></svg>
<div class="t" style="left:227.40px;top:413.64px;font-size:5.6px;color:#1e1e1e;transform:scaleX(0.905);transform-origin:0 0">WavFilePlayer</div>
<div class="m" style="left:294.3px;top:261.3px;width:76.2px;height:105.3px"></div>
<div class="t" style="left:297.10px;top:264.60px;font-size:5.6px;color:#1e1e1e;transform:scaleX(0.905);transform-origin:0 0">ADAT_DrumSamplePlayer</div>
<div class="t" style="left:297.10px;top:273.31px;font-size:5.6px;color:#1e1e1e;transform:scaleX(0.905);transform-origin:0 0">AK4558</div>
<svg class="a" style="left:363.00px;top:272.61px" width="5" height="5"><path d="M1.4 1.4 L3.1 2.5 L1.4 3.6 Z" fill="#000"/></svg>
<div class="t" style="left:297.10px;top:282.02px;font-size:5.6px;color:#1e1e1e;transform:scaleX(0.905);transform-origin:0 0">PassThroughMono</div>
<div class="t" style="left:297.10px;top:290.73px;font-size:5.6px;color:#1e1e1e;transform:scaleX(0.905);transform-origin:0 0">PassThroughQuad</div>
<div class="t" style="left:297.10px;top:299.44px;font-size:5.6px;color:#1e1e1e;transform:scaleX(0.905);transform-origin:0 0">PassThroughStereo</div>
<div class="t" style="left:297.10px;top:308.15px;font-size:5.6px;color:#1e1e1e;transform:scaleX(0.905);transform-origin:0 0">PassThroughUSB</div>
<div class="t" style="left:297.10px;top:316.86px;font-size:5.6px;color:#1e1e1e;transform:scaleX(0.905);transform-origin:0 0">PT8211Sine</div>
<div class="t" style="left:297.10px;top:325.57px;font-size:5.6px;color:#1e1e1e;transform:scaleX(0.905);transform-origin:0 0">SdCardTest</div>
<div class="a" style="left:295.3px;top:331.68px;width:74.2px;height:8.8px;background:#4b6885"></div>
<div class="t" style="left:297.10px;top:334.28px;font-size:5.6px;color:#fff;transform:scaleX(0.905);transform-origin:0 0">SGTL5000</div>
<svg class="a" style="left:363.00px;top:333.58px" width="5" height="5"><path d="M1.4 1.4 L3.1 2.5 L1.4 3.6 Z" fill="#fff"/></svg>
<div class="t" style="left:297.10px;top:342.99px;font-size:5.6px;color:#1e1e1e;transform:scaleX(0.905);transform-origin:0 0">ToneSweep</div>
<div class="t" style="left:297.10px;top:351.70px;font-size:5.6px;color:#1e1e1e;transform:scaleX(0.905);transform-origin:0 0">WavFilePlayerUSB</div>
<div class="t" style="left:297.10px;top:360.41px;font-size:5.6px;color:#1e1e1e;transform:scaleX(0.905);transform-origin:0 0">WM8731MikroSine</div>
<div class="m" style="left:370.6px;top:331.5px;width:67.7px;height:62px"></div>
<div class="t" style="left:373.40px;top:335.20px;font-size:5.6px;color:#1e1e1e;transform:scaleX(0.905);transform-origin:0 0">balanceDAC</div>
<div class="t" style="left:373.40px;top:343.92px;font-size:5.6px;color:#1e1e1e;transform:scaleX(0.905);transform-origin:0 0">balanceHP</div>
<div class="t" style="left:373.40px;top:352.64px;font-size:5.6px;color:#1e1e1e;transform:scaleX(0.905);transform-origin:0 0">CalcBiquadToneControlDAP</div>
<div class="t" style="left:373.40px;top:361.36px;font-size:5.6px;color:#1e1e1e;transform:scaleX(0.905);transform-origin:0 0">dap_avc_agc</div>
<div class="t" style="left:373.40px;top:370.08px;font-size:5.6px;color:#1e1e1e;transform:scaleX(0.905);transform-origin:0 0">dap_bass_enhance</div>
<div class="t" style="left:373.40px;top:378.80px;font-size:5.6px;color:#1e1e1e;transform:scaleX(0.905);transform-origin:0 0">QuadChannelOutput</div>
<div class="a" style="left:371.6px;top:384.92px;width:65.7px;height:8.8px;background:#4b6885"></div>
<div class="t" style="left:373.40px;top:387.52px;font-size:5.6px;color:#fff;transform:scaleX(0.905);transform-origin:0 0">VolumeRamp</div>
<div class="a" style="left:0px;top:441.7px;width:730px;height:14.3px;background:#2e3235;"></div>
<div class="a" style="left:0px;top:441.7px;width:730px;height:0.6px;background:#3e4246;"></div>
<svg class="a" style="left:1px;top:444px" width="11" height="11"><circle cx="4" cy="5.5" r="3" fill="none" stroke="#e8e8e8" stroke-width="1.3" stroke-dasharray="1.2 0.9"/><path d="M6.5 1.5 V9.5 M6.8 5.5 L9.8 2 M6.8 5.5 L9.8 9.5" stroke="#f2f2f2" stroke-width="1.3" fill="none"/></svg>
<svg class="a" style="left:14px;top:443px" width="13" height="13"><circle cx="6" cy="6" r="5.5" fill="#3daee9"/><path d="M2 4 Q6 1 10 3 L11 9 Q8 12 4 10 Z" fill="#e8f6fd"/><path d="M4 6 L10 8 L12 12 L7 11Z" fill="#1d78b8"/></svg>
<svg class="a" style="left:30.5px;top:445px" width="9" height="9"><circle cx="4" cy="5" r="3.6" fill="#2ea4e4"/><path d="M2 5 L6 3.5 L5 7 Z" fill="#fff"/><circle cx="7" cy="1.7" r="1.6" fill="#55b8ee"/></svg>
<div class="t" style="left:41px;top:447.2px;font-size:5.3px;color:#d8dadb;">Telegram (1)</div>
<svg class="a" style="left:91.5px;top:445px" width="9" height="9"><circle cx="4.5" cy="4.5" r="4" fill="#7a45e0"/><circle cx="4.8" cy="4.3" r="2.4" fill="#3f8ef5"/><path d="M1 3 Q3 0 6.5 0.7 Q4 1.5 4 3" fill="#ff8a1f"/></svg>
<div class="t" style="left:102.3px;top:447.2px;font-size:5.3px;color:#d8dadb;">Teensyduino Tutor...</div>
<svg class="a" style="left:153.5px;top:445px" width="9" height="9"><circle cx="4.5" cy="4.5" r="4" fill="#de4b38"/><path d="M4.5 4.5 L0.6 3 A4 4 0 0 0 3 8.3 Z" fill="#2ba24c"/><path d="M4.5 4.5 L3 8.3 A4 4 0 0 0 8.4 3.5 Z" fill="#fcd02a"/><circle cx="4.5" cy="4.5" r="1.7" fill="#4a8af4" stroke="#fff" stroke-width="0.6"/></svg>
<div class="t" style="left:164.2px;top:447.2px;font-size:5.3px;color:#d8dadb;">Acoustic Inter...</div>
<svg class="a" style="left:204px;top:445px" width="8" height="9"><path d="M1 3.3 H2.6 L4.8 1.2 V7.8 L2.6 5.7 H1 Z" fill="#dcdcdc"/><path d="M5.8 2.8 Q7.2 4.5 5.8 6.2" stroke="#dcdcdc" stroke-width="0.7" fill="none"/></svg>
<div class="a" style="left:212.9px;top:441.7px;width:60.7px;height:14.3px;background:#56432f;"></div>
<div class="a" style="left:212.9px;top:441.7px;width:60.7px;height:0.9px;background:#d07b2a;"></div>
<svg class="a" style="left:214.5px;top:444.5px" width="10" height="11"><circle cx="5" cy="4.8" r="4" fill="#2a74c9"/><rect x="2.6" y="3.3" width="4.8" height="3.4" fill="#fff"/><circle cx="3" cy="9" r="1.3" fill="#2ec35a"/></svg>
<div class="t" style="left:226.2px;top:447.2px;font-size:5.3px;color:#dcd6cf;">Thunderbird Mail</div>
<svg class="a" style="left:276.5px;top:444.5px" width="9" height="11"><path d="M0.5 2.5 H3.5 L4.5 3.5 H8.5 V8.5 H0.5 Z" fill="#3daee9"/><circle cx="2.6" cy="9.2" r="1.3" fill="#2ec35a"/></svg>
<div class="a" style="left:446.5px;top:449px;width:4px;height:0.8px;background:#ddd;"></div>
<div class="a" style="left:452.5px;top:450.5px;width:3px;height:0.8px;background:#ddd;"></div>
<div class="t" style="left:461px;top:447.4px;font-size:5.2px;color:#5f8f5f;font-weight:bold;letter-spacing:-0.2px">RCI</div>
<div class="t" style="left:472px;top:447.2px;font-size:5.3px;color:#d8dadb;">Teensy</div>
<div class="a" style="left:521.4px;top:441.7px;width:60.6px;height:14.3px;background:#363a3e;"></div>
<div class="a" style="left:521.4px;top:441.7px;width:60.6px;height:0.6px;background:#5a5e62;"></div>
<svg class="a" style="left:522px;top:445px" width="9" height="9"><circle cx="4.5" cy="4.5" r="4" fill="#de4b38"/><path d="M4.5 4.5 L0.6 3 A4 4 0 0 0 3 8.3 Z" fill="#2ba24c"/><path d="M4.5 4.5 L3 8.3 A4 4 0 0 0 8.4 3.5 Z" fill="#fcd02a"/><circle cx="4.5" cy="4.5" r="1.7" fill="#4a8af4" stroke="#fff" stroke-width="0.6"/></svg>
<div class="t" style="left:533.5px;top:447.2px;font-size:5.3px;color:#d8dadb;">jitsi.chair.audio is...</div>
<svg class="a" style="left:585px;top:443px" width="145" height="13"><circle cx="5.3" cy="6.3" r="2.9" fill="none" stroke="#cfcfcf" stroke-width="0.8"/><path d="M5.3 4.8 V6.5 L6.5 7" stroke="#cfcfcf" stroke-width="0.6" fill="none"/><rect x="13.5" y="2.8" width="2" height="5" rx="1" fill="#d8d8d8"/><path d="M12.5 6.5 Q14.5 9.5 16.5 6.5 M14.5 8.5 V10.5" stroke="#d8d8d8" stroke-width="0.6" fill="none"/><circle cx="25.5" cy="6.3" r="3" fill="none" stroke="#d8d8d8" stroke-width="0.8"/><path d="M25.5 4.5 V7" stroke="#d8d8d8" stroke-width="1"/><circle cx="35.7" cy="6.5" r="3.3" fill="#2e6fd8"/><circle cx="36.3" cy="7.2" r="2.4" fill="#e8332a"/><rect x="52" y="3.5" width="6" height="6" fill="none" stroke="#d0d0d0" stroke-width="0.8"/><path d="M52 7 H58" stroke="#d0d0d0" stroke-width="0.8"/><rect x="61.5" y="3" width="6.5" height="5" fill="none" stroke="#d0d0d0" stroke-width="0.8"/><path d="M64.7 8 V10 M62.5 10 H67" stroke="#d0d0d0" stroke-width="0.8"/><rect x="72.5" y="3" width="5" height="7" fill="none" stroke="#d0d0d0" stroke-width="0.8"/><rect x="74" y="2" width="2" height="1" fill="#d0d0d0"/><path d="M81.5 5 H83 L85 3.3 V9.7 L83 8 H81.5 Z" fill="#dcdcdc"/><path d="M86 4.5 Q87 6.5 86 8.5" stroke="#dcdcdc" stroke-width="0.7" fill="none"/><path d="M92.5 7.5 L95 5 L97.5 7.5 Z" fill="#e0e0e0"/><rect x="125" y="3" width="7" height="5.5" fill="none" stroke="#d0d0d0" stroke-width="0.8"/><path d="M126.5 10 H130.5" stroke="#d0d0d0" stroke-width="0.6"/><path d="M135.5 5 H140 M138.5 3.8 L140 5 M135.5 8 H140 M137 6.8 L135.5 8" stroke="#bcbcbc" stroke-width="0.6" fill="none"/></svg>
<div class="t" style="left:625.8px;top:445.6px;font-size:7.0px;color:#e6e6e6;">de</div>
<div class="t" style="left:685.5px;top:445.2px;font-size:10.2px;color:#e4e4e4;transform:scaleX(0.86);transform-origin:0 0">10:46</div>
<div class="a" style="left:285.4px;top:436.5px;width:160px;height:16px;background:#f0f0f0;border:0.6px solid #d0d0d0;box-shadow:0 0 2px rgba(0,0,0,.2)"></div>
<div class="a" style="left:289.5px;top:441px;width:0.6px;height:6px;background:#bbb;"></div>
<div class="a" style="left:291px;top:441px;width:0.6px;height:6px;background:#bbb;"></div>
<div class="t" style="left:295px;top:442.2px;font-size:5.09px;color:#333;">jitsi.chair.audio is sharing your screen.</div>
<div class="a" style="left:385.1px;top:438.6px;width:41.7px;height:11.7px;background:#3f9fe6;border-radius:1px"></div>
<div class="t" style="left:391px;top:442.3px;font-size:5.25px;color:#fff;">Stop sharing</div>
<div class="t" style="left:430px;top:442.3px;font-size:5.1px;color:#5a8fc0;">Hide</div>
</div></body></html>
